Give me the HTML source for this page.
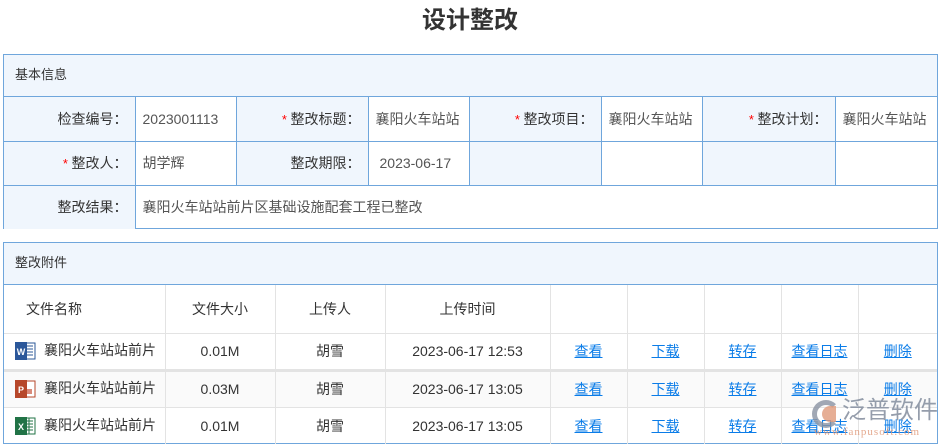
<!DOCTYPE html>
<html><head><meta charset="utf-8"><style>
*{margin:0;padding:0;box-sizing:border-box}
body{width:940px;height:445px;background:#fff;font-family:"Liberation Sans","Noto Sans CJK SC",sans-serif;font-size:14px;color:#333;position:relative;overflow:hidden}
.abs{position:absolute;white-space:nowrap}
h1{position:absolute;top:4px;left:0;width:940px;text-align:center;font-size:24px;font-weight:bold;color:#333;line-height:34px}
.box{position:absolute;left:3px;width:935px;border:1px solid #6fa6dc}
.hd{background:#f0f6fd;height:42px;line-height:40px;padding-left:11px;font-size:13px;border-bottom:1px solid #6fa6dc}
table{border-collapse:collapse;table-layout:fixed}
.t1 td{border:1px solid #6fa6dc;height:44px;font-size:14px}
.t1 td.l{background:#f0f6fd;text-align:right;padding-right:7px;color:#333}
.t1 td.v{color:#555;padding-left:7px}
.t1 tr:first-child td{border-top:none}
.t1 td:first-child{border-left:none}
.t1 td:last-child{border-right:none}
.t1 tr:last-child td{border-bottom:none}
.r{color:#f00;font-size:13px}
.t2 td{border:1px solid #e3e3e3;text-align:center;font-size:14px;color:#333}
.t2 tr td:first-child{border-left:none}
.t2 tr td:last-child{border-right:none}
.t2 tr:first-child td{border-top:none;height:48px}
.t2 tr.d td{height:37px}
.t2 tr.g td{background:#fafafa;border-top:3px solid #e3e3e3}
.t2 tr:last-child td{border-bottom:none}
a{color:#0a7ce8;text-decoration:underline}
.fn{text-align:left!important;padding-left:10px;white-space:nowrap}
.ic{display:inline-block;width:22px;height:22px;vertical-align:middle;margin-right:8px}
</style></head><body>
<h1>设计整改</h1>
<div class="box" style="top:54px;height:175px">
<div class="hd">基本信息</div>
<table class="t1" style="width:933px">
<colgroup><col style="width:131px"><col style="width:101px"><col style="width:132px"><col style="width:101px"><col style="width:132px"><col style="width:101px"><col style="width:133px"><col style="width:102px"></colgroup>
<tr><td class="l">检查编号：</td><td class="v">2023001113</td><td class="l"><span class="r">* </span>整改标题：</td><td class="v">襄阳火车站站</td><td class="l"><span class="r">* </span>整改项目：</td><td class="v">襄阳火车站站</td><td class="l"><span class="r">* </span>整改计划：</td><td class="v">襄阳火车站站</td></tr>
<tr><td class="l"><span class="r">* </span>整改人：</td><td class="v">胡学辉</td><td class="l">整改期限：</td><td class="v" style="padding-left:11px">2023-06-17</td><td class="l"></td><td class="v"></td><td class="l"></td><td class="v"></td></tr>
<tr><td class="l">整改结果：</td><td class="v" colspan="7">襄阳火车站站前片区基础设施配套工程已整改</td></tr>
</table>
</div>
<div class="box" style="top:242px;height:202px">
<div class="hd">整改附件</div>
<table class="t2" style="width:933px">
<colgroup><col style="width:161px"><col style="width:110px"><col style="width:110px"><col style="width:165px"><col style="width:77px"><col style="width:77px"><col style="width:77px"><col style="width:77px"><col style="width:79px"></colgroup>
<tr><td class="fn" style="padding-left:22px">文件名称</td><td>文件大小</td><td>上传人</td><td>上传时间</td><td></td><td></td><td></td><td></td><td></td></tr>
<tr class="d"><td class="fn"><svg class="ic" viewBox="0 0 22 22"><rect x="9" y="3" width="12" height="16" fill="#fff" stroke="#2b5797"/><path d="M11 6h8M11 9h8M11 12h8M11 15h8" stroke="#2b5797"/><rect x="1" y="2" width="12" height="18" fill="#2b579a"/><text x="7" y="15" font-size="9" fill="#fff" text-anchor="middle" font-weight="bold">W</text></svg>襄阳火车站站前片</td><td>0.01M</td><td>胡雪</td><td>2023-06-17 12:53</td><td><a>查看</a></td><td><a>下载</a></td><td><a>转存</a></td><td><a>查看日志</a></td><td><a>删除</a></td></tr>
<tr class="d g"><td class="fn"><svg class="ic" viewBox="0 0 22 22"><rect x="9" y="3" width="12" height="16" fill="#fff" stroke="#b7472a"/><rect x="12" y="11" width="6" height="5" fill="#d98a7a"/><rect x="1" y="2" width="12" height="18" fill="#b7472a"/><text x="7" y="15" font-size="9" fill="#fff" text-anchor="middle" font-weight="bold">P</text></svg>襄阳火车站站前片</td><td>0.03M</td><td>胡雪</td><td>2023-06-17 13:05</td><td><a>查看</a></td><td><a>下载</a></td><td><a>转存</a></td><td><a>查看日志</a></td><td><a>删除</a></td></tr>
<tr class="d"><td class="fn"><svg class="ic" viewBox="0 0 22 22"><rect x="9" y="3" width="12" height="16" fill="#fff" stroke="#217346"/><path d="M11 6h8M11 9h8M11 12h8M11 15h8M15 3v16" stroke="#217346"/><rect x="1" y="2" width="12" height="18" fill="#217346"/><text x="7" y="15" font-size="9" fill="#fff" text-anchor="middle" font-weight="bold">X</text></svg>襄阳火车站站前片</td><td>0.01M</td><td>胡雪</td><td>2023-06-17 13:05</td><td><a>查看</a></td><td><a>下载</a></td><td><a>转存</a></td><td><a>查看日志</a></td><td><a>删除</a></td></tr>
</table>
</div>
<div class="abs" style="left:812px;top:400px;width:28px;height:28px;border-radius:50%;border:5px solid #8a93a3;border-right-color:transparent;opacity:.8"></div>
<div class="abs" style="left:822px;top:406px;width:14px;height:16px;background:#e09a7a;opacity:.8;border-radius:8px 0 0 8px"></div>
<div class="abs" style="left:842px;top:397px;font-size:24px;line-height:28px;color:#8a93a3;opacity:.9;letter-spacing:0">泛普软件</div>
<div class="abs" style="left:814px;top:426px;font-size:11px;color:#e09a7a;font-family:'Liberation Serif',serif;letter-spacing:1px;opacity:.85">www.fanpusoft.com</div>
</body></html>
